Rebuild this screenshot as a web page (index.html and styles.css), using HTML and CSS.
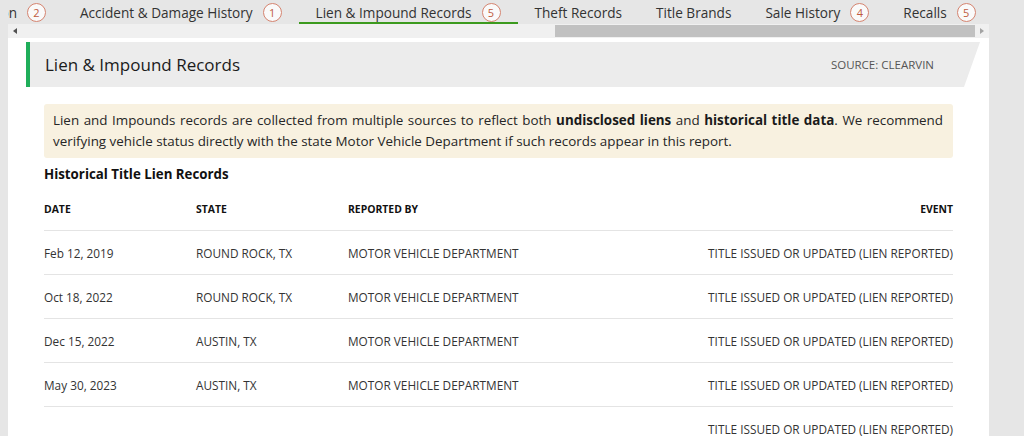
FILE: index.html
```html
<!DOCTYPE html>
<html lang="en">
<head>
<meta charset="utf-8">
<title>Lien &amp; Impound Records</title>
<link rel="stylesheet" href="styles.css">
</head>
<body>
<div class="frame">
  <nav class="tabs">
    <div class="tab tab-clipped"><span class="tab-label">Specification</span><span class="badge">2</span></div>
    <div class="tab"><span class="tab-label">Accident &amp; Damage History</span><span class="badge">1</span></div>
    <div class="tab active"><span class="tab-label">Lien &amp; Impound Records</span><span class="badge">5</span></div>
    <div class="tab"><span class="tab-label">Theft Records</span></div>
    <div class="tab"><span class="tab-label">Title Brands</span></div>
    <div class="tab"><span class="tab-label">Sale History</span><span class="badge">4</span></div>
    <div class="tab"><span class="tab-label">Recalls</span><span class="badge">5</span></div>
  </nav>
  <div class="scrollbar">
    <span class="sb-btn sb-left"><span class="tri-left"></span></span>
    <span class="sb-track"><span class="sb-thumb"></span></span>
    <span class="sb-btn sb-right"><span class="tri-right"></span></span>
  </div>
  <main class="panel">
    <header class="section-head">
      <h2 class="section-title">Lien &amp; Impound Records</h2>
      <span class="section-source">SOURCE: CLEARVIN</span>
    </header>
    <div class="content">
      <p class="notice">Lien and Impounds records are collected from multiple sources to reflect both <b>undisclosed liens</b> and <b>historical title data</b>. We recommend verifying vehicle status directly with the state Motor Vehicle Department if such records appear in this report.</p>
      <h3 class="sub-title">Historical Title Lien Records</h3>
      <table class="records">
        <colgroup>
          <col class="c-date"><col class="c-state"><col class="c-rep"><col>
        </colgroup>
        <thead>
          <tr><th>Date</th><th>State</th><th>Reported By</th><th class="right">Event</th></tr>
        </thead>
        <tbody>
          <tr><td>Feb 12, 2019</td><td>ROUND ROCK, TX</td><td>MOTOR VEHICLE DEPARTMENT</td><td class="right">TITLE ISSUED OR UPDATED (LIEN REPORTED)</td></tr>
          <tr><td>Oct 18, 2022</td><td>ROUND ROCK, TX</td><td>MOTOR VEHICLE DEPARTMENT</td><td class="right">TITLE ISSUED OR UPDATED (LIEN REPORTED)</td></tr>
          <tr><td>Dec 15, 2022</td><td>AUSTIN, TX</td><td>MOTOR VEHICLE DEPARTMENT</td><td class="right">TITLE ISSUED OR UPDATED (LIEN REPORTED)</td></tr>
          <tr><td>May 30, 2023</td><td>AUSTIN, TX</td><td>MOTOR VEHICLE DEPARTMENT</td><td class="right">TITLE ISSUED OR UPDATED (LIEN REPORTED)</td></tr>
          <tr><td></td><td></td><td></td><td class="right">TITLE ISSUED OR UPDATED (LIEN REPORTED)</td></tr>
        </tbody>
      </table>
    </div>
  </main>
</div>
</body>
</html>
```

FILE: styles.css
```css
html, body {
  margin: 0;
  padding: 0;
}
body {
  background: #e6e6e6;
  font-family: "Open Sans", "Noto Sans", "Liberation Sans", sans-serif;
  color: #222;
  height: 436px;
  overflow: hidden;
}
.frame {
  margin-left: 8px;
  width: 981px;
}

/* Tabs */
.tabs {
  display: flex;
  height: 24px;
  white-space: nowrap;
  overflow: hidden;
}
.tab {
  display: flex;
  align-items: center;
  padding: 0 17px;
  height: 24px;
  box-sizing: border-box;
  font-size: 13.6px;
  color: #333;
  flex: none;
}
.tab.active {
  border-bottom: 2px solid #3c9a1e;
  padding-top: 2px;
}
.tab-clipped {
  padding-left: 0;
}
.tab-clipped .tab-label {
  display: block;
  width: 9px;
  overflow: hidden;
  direction: rtl;
  white-space: nowrap;
}
.badge {
  flex: none;
  display: inline-flex;
  align-items: center;
  justify-content: center;
  width: 17px;
  height: 17px;
  margin-left: 10px;
  border: 1px solid #d58470;
  border-radius: 50%;
  background: #fafafa;
  color: #c05a40;
  font-size: 11px;
  line-height: 1;
}

/* Fake horizontal scrollbar */
.scrollbar {
  display: flex;
  height: 14px;
  background: #f0f0f0;
}
.sb-btn {
  width: 14px;
  display: flex;
  align-items: center;
  justify-content: center;
  flex: none;
}
.sb-track {
  flex: 1;
  display: flex;
  align-items: center;
}
.sb-thumb {
  margin-left: auto;
  width: 420px;
  height: 12px;
  background: #c1c1c1;
}
.tri-left {
  width: 0;
  height: 0;
  border-top: 3px solid transparent;
  border-bottom: 3px solid transparent;
  border-right: 4px solid #505050;
}
.tri-right {
  width: 0;
  height: 0;
  border-top: 3px solid transparent;
  border-bottom: 3px solid transparent;
  border-left: 4px solid #a3a3a3;
}

/* Panel */
.panel {
  background: #fff;
  padding-top: 4px;
  min-height: 420px;
}
.section-head {
  display: flex;
  align-items: center;
  justify-content: space-between;
  margin-left: 18px;
  width: 954px;
  height: 45px;
  box-sizing: border-box;
  border-left: 4px solid #1fae5a;
  background: #ececec;
  padding: 0 46px 0 15px;
  clip-path: polygon(0 0, 100% 0, calc(100% - 16px) 100%, 0 100%);
}
.section-title {
  margin: 0;
  font-size: 17px;
  font-weight: 500;
  color: #1b1b1b;
}
.section-source {
  font-size: 11.5px;
  color: #555;
}
.content {
  padding: 17px 36px 0 36px;
}
.notice {
  margin: 0;
  background: #f8f1e0;
  border-radius: 3px;
  padding: 6px 10px 6px 9px;
  font-size: 13.4px;
  line-height: 21px;
  text-align: justify;
  color: #262626;
}
.notice b {
  font-weight: 700;
  color: #1a1a1a;
}
.sub-title {
  margin: 6px 0 3px;
  font-size: 13.3px;
  line-height: 20px;
  font-weight: 700;
  color: #111;
}
.records {
  width: 100%;
  border-collapse: collapse;
  table-layout: fixed;
}
.c-date, .c-state { width: 152px; }
.c-rep { width: 300px; }
.records th {
  height: 43px;
  padding: 0;
  text-align: left;
  font-size: 10.4px;
  font-weight: 700;
  text-transform: uppercase;
  color: #111;
  vertical-align: middle;
}
.records td {
  height: 43px;
  padding: 0;
  border-top: 1px solid #e4e4e4;
  font-size: 11.8px;
  color: #333;
  vertical-align: middle;
  white-space: nowrap;
}
.records .right {
  text-align: right;
}
```
